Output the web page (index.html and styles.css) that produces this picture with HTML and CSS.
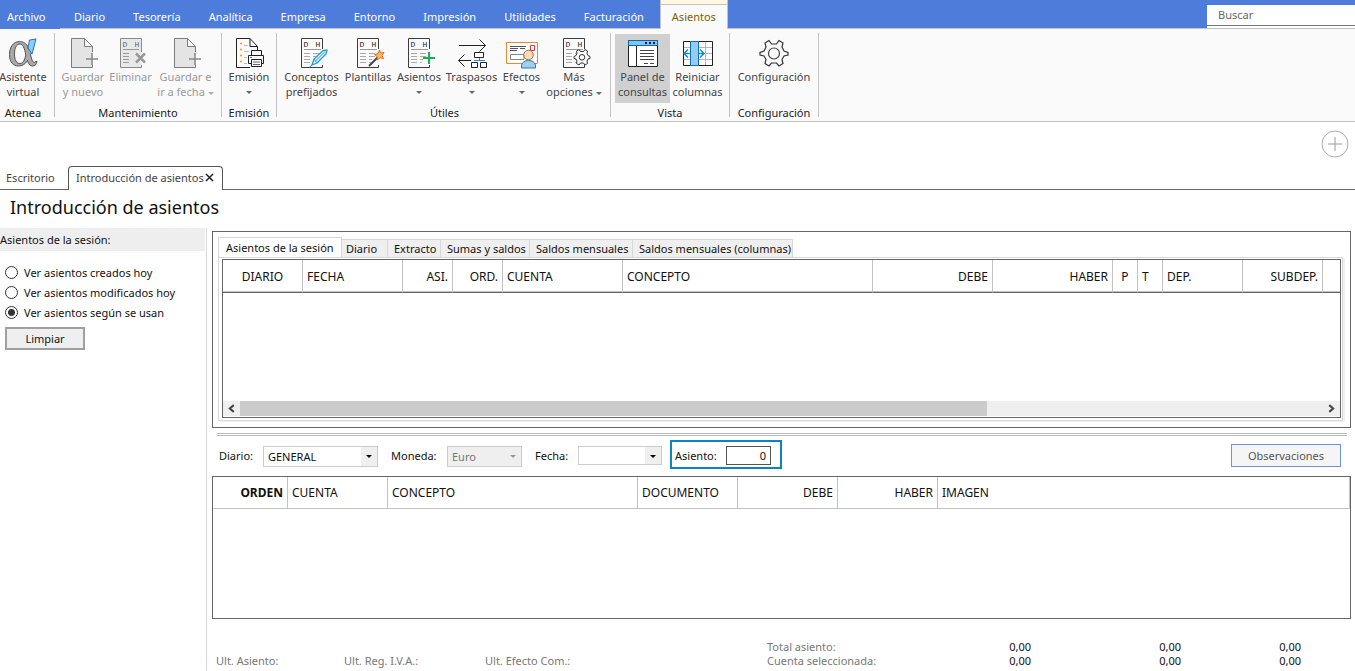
FILE: index.html
```html
<!DOCTYPE html>
<html lang="es">
<head>
<meta charset="utf-8">
<title>Introducción de asientos</title>
<link rel="stylesheet" href="styles.css">
</head>
<body>
<svg class="defs" aria-hidden="true">
  <defs>
    <symbol id="page-plus" viewBox="0 0 32 32">
      <path d="M25.500 15V9.500L17.500 1.500H4.500V30.500H25.500V28" fill="#e4e4e4" stroke="#7c7c7c"/>
      <path d="M17.500 1.500V9.500H25.500Z" fill="#fafafa" stroke="#7c7c7c"/>
      <path d="M19 22H31M25 16V28" stroke="#868686" stroke-width="1.500"/>
    </symbol>
    <symbol id="ledger" viewBox="0 0 32 32">
      <path d="M26.500 12V1.500H5.500V30.500H26.500V28" fill="none" stroke="#3c3c3c"/>
      <text x="7.500" y="10" font-size="8" font-family="Liberation Mono, monospace" fill="#222">D</text>
      <text x="19.500" y="10" font-size="8" font-family="Liberation Mono, monospace" fill="#222">H</text>
      <path d="M8 12.500H25" stroke="#999"/>
      <path d="M8 16.500H14M8 19.500H14M8 22.500H14M8 25.500H14M17 16.500H23M17 19.500H23M17 22.500H20M17 25.500H19" stroke="#aaa"/>
    </symbol>
  </defs>
</svg>

<header class="menubar">
  <nav class="menu">
    <button class="menu-item menu-file">Archivo</button>
    <button class="menu-item">Diario</button>
    <button class="menu-item">Tesorería</button>
    <button class="menu-item">Analítica</button>
    <button class="menu-item">Empresa</button>
    <button class="menu-item">Entorno</button>
    <button class="menu-item">Impresión</button>
    <button class="menu-item">Utilidades</button>
    <button class="menu-item">Facturación</button>
    <button class="menu-item menu-active">Asientos</button>
  </nav>
  <input class="search" type="text" placeholder="Buscar" aria-label="Buscar">
</header>

<section class="ribbon">
  <div class="group group-first">
    <div class="tools">
      <button class="tool w-46">
        <svg class="icon" viewBox="0 0 32 32"><path d="M20.500 9C18 5.500 15.500 4.500 12.500 4.500C6.500 4.500 2.500 10 2.500 17.500C2.500 25 6 29 11.500 29C15.500 29 18.500 27 20.500 23.500C21.500 27.500 23.500 29 25.500 29C28 29 29.500 27.500 30 24.500H28.500C28 26 26 26 25 23L23.500 18L27 8H23L21.500 12.500ZM13 7C16 7 17.500 11 18.800 18C17.500 24 15.500 26.500 13 26.500C9.500 26.500 7.500 23 7.500 17C7.500 11 9.500 7 13 7Z" fill="#a8a8a8" stroke="#555" fill-rule="evenodd"/><path d="M22.500 3L29 2L25 17L21 11Z" fill="#8fcdf5" stroke="#1c78b8"/></svg>
        <span>Asistente<br>virtual</span>
      </button>
    </div>
    <div class="group-name">Atenea</div>
  </div>
  <div class="group group-edit">
    <div class="tools">
      <button class="tool w-54" disabled><svg class="icon"><use href="#page-plus"/></svg><span>Guardar<br>y nuevo</span></button>
      <button class="tool w-41" disabled>
        <svg class="icon" viewBox="0 0 32 32"><path d="M26.500 15V1.500H5.500V30.500H26.500V28" fill="#e8e8e8" stroke="#8a8a8a"/><text x="7.500" y="10" font-size="8" font-family="Liberation Mono, monospace" fill="#666">D</text><text x="19.500" y="10" font-size="8" font-family="Liberation Mono, monospace" fill="#666">H</text><path d="M8 12.500H24" stroke="#999"/><path d="M8 16.500H14M8 19.500H14M8 22.500H14M8 25.500H14" stroke="#999"/><path d="M21 16.500L30 25.500M30 16.500L21 25.500" stroke="#999" stroke-width="2.500"/></svg>
        <span>Eliminar</span>
      </button>
      <button class="tool w-69" disabled><svg class="icon"><use href="#page-plus"/></svg><span>Guardar e<br>ir a fecha <i class="caret"></i></span></button>
    </div>
    <div class="group-name">Mantenimiento</div>
  </div>
  <div class="group">
    <div class="tools">
      <button class="tool w-54">
        <svg class="icon" viewBox="0 0 32 32"><path d="M24.500 13V9.500L17 1.500H3.500V30.500H17M17 1.500V9.500H24.500" fill="none" stroke="#222"/><path d="M7 6.500H9M7 12.500H9M7 18.500H9M7 24.500H9" stroke="#f29a1f" stroke-width="1.500"/><path d="M11 8.500H15M11 14.500H16M11 20.500H14M11 26.500H14" stroke="#bbb"/><path d="M18.500 18.500V13.500H28.500V18.500M18.500 26.500H15.500V18.500H30.500V26.500H28.500" fill="#fff" stroke="#222"/><path d="M18.500 22.500H28.500V29.500H18.500Z" fill="#fff" stroke="#222"/><path d="M20 25H27M20 27.500H27" stroke="#666"/><path d="M17 20.500H19" stroke="#168bd0"/></svg>
        <span>Emisión</span><i class="caret"></i>
      </button>
    </div>
    <div class="group-name">Emisión</div>
  </div>
  <div class="group group-wide">
    <div class="tools">
      <button class="tool w-57">
        <svg class="icon" viewBox="0 0 32 32"><use href="#ledger"/><path d="M16 28L18 22L27 13.500L31 13L30 17L21 26Z" fill="#e3f5fd" stroke="#1c9cd8" stroke-width="1.300"/><path d="M18 22L21 26M19.500 24L29 14.500M16 28L13.500 30" stroke="#1c9cd8"/></svg>
        <span>Conceptos<br>prefijados</span>
      </button>
      <button class="tool w-56">
        <svg class="icon" viewBox="0 0 32 32"><use href="#ledger"/><path d="M17 29L27 19" stroke="#444" stroke-width="2"/><path d="M27.500 13L28.800 16L32 15.500L30 18.500L31.500 21.500L28 20.700L25.500 23L25 19.500L22.500 17.500L26 16.700Z" fill="#fbc24b" stroke="#e8642b"/></svg>
        <span>Plantillas</span>
      </button>
      <button class="tool w-46">
        <svg class="icon" viewBox="0 0 32 32"><use href="#ledger"/><path d="M20 21H32M26 15V27" stroke="#1eac57" stroke-width="2"/></svg>
        <span>Asientos</span><i class="caret"></i>
      </button>
      <button class="tool w-59">
        <svg class="icon" viewBox="0 0 32 32"><path d="M3 8.500H29.500M23.500 2.500L29.500 8.500L23.500 14.500M15 23.500H2.500M8.500 17.500L2.500 23.500L8.500 29.500" fill="none" stroke="#222"/><path d="M18 23.500H29M23.500 21V23.500" stroke="#1c8fd0"/><path d="M18.500 15.500H27.500V20.500H18.500ZM15.500 25.500H21.500V30.500H15.500ZM24.500 25.500H30.500V30.500H24.500Z" fill="#fff" stroke="#222"/></svg>
        <span>Traspasos</span><i class="caret"></i>
      </button>
      <button class="tool w-41">
        <svg class="icon" viewBox="0 0 32 32"><path d="M.500 5.500H31.500V26.500H.500Z" fill="#fff" stroke="#ec8b2d"/><path d="M4 9.500H20M4 11.500H12M14 11.500H19M4 13.500H11" stroke="#555"/><path d="M4.500 17.500H18V22.500H4.500Z" fill="none" stroke="#888"/><path d="M24.500 8.500H28.500V13.500H24.500Z" fill="none" stroke="#ee3338"/><path d="M15.500 31V28Q17 23.500 22.500 23.500Q28 23.500 29.500 28V31Z" fill="#9fd0f0" stroke="#327aad"/><circle cx="22.500" cy="18" r="4.800" fill="#fbdcb9" stroke="#a56d45"/></svg>
        <span>Efectos</span><i class="caret"></i>
      </button>
      <button class="tool w-64">
        <svg class="icon" viewBox="0 0 32 32"><use href="#ledger"/><path d="M21 12.500L22.500 14.500H25.500L27 12.500L29.500 14L29 16.500L30 18.500L32 19.500V21.500L30 22L29 24L29.500 26.500L27 28L25.500 26H22.500L21 28L18.500 26.500L19 24L18 22L16 21.500V19.500L18 18.500L19 16.500L18.500 14Z" fill="#fafafa" stroke="#333"/><circle cx="24" cy="20.300" r="2.800" fill="none" stroke="#333"/></svg>
        <span>Más<br>opciones <i class="caret"></i></span>
      </button>
    </div>
    <div class="group-name">Útiles</div>
  </div>
  <div class="group group-view">
    <div class="tools">
      <button class="tool w-55 tool-on" aria-pressed="true">
        <svg class="icon" viewBox="0 0 32 32"><path d="M1.500 3.500H30.500V29.500H1.500Z" fill="#fff" stroke="#222"/><path d="M1.500 3.500H30.500V8.500H1.500Z" fill="#82c5ee" stroke="#0f67a8"/><path d="M9.500 9V29" stroke="#222"/><path d="M18 6H20M22 6H24M26 6H28" stroke="#123" stroke-width="2"/><path d="M13 13.500H27M13 16.500H27M13 19.500H27M13 22.500H27M17 26.500H21M23 26.500H27" stroke="#444"/></svg>
        <span>Panel de<br>consultas</span>
      </button>
      <button class="tool w-55">
        <svg class="icon" viewBox="0 0 32 32"><path d="M1.500 4.500H30.500V28.500H1.500Z" fill="#fff"/><path d="M2 10.500H30M2 16.500H30M2 22.500H30M23.500 5V28" stroke="#b5b5b5"/><path d="M1.500 4.500H30.500V28.500H1.500Z" fill="none" stroke="#222"/><path d="M8.500 4.500H16.500V28.500H8.500Z" fill="#92cef3" stroke="#146bb0"/><path d="M7.500 16.500H2.500M6 12.500L2 16.500L6 20.500M16.500 16.500H22M18 12.500L22 16.500L18 20.500" fill="none" stroke="#168bd0" stroke-width="1.500"/></svg>
        <span>Reiniciar<br>columnas</span>
      </button>
    </div>
    <div class="group-name">Vista</div>
  </div>
  <div class="group">
    <div class="tools">
      <button class="tool w-88">
        <svg class="icon" viewBox="0 0 32 32"><path d="M11 3.500L13.500 7H18.500L21 3.500L25 6L24 10L26 14L30 15.500V18L26 19L24 22.500L25 26.500L21 29L18.500 26H13.500L11 29L7 26.500L8 22.500L6 19L2 18V15.500L6 14L8 10L7 6Z" fill="#fafafa" stroke="#333" stroke-width="1.200"/><circle cx="16" cy="16.500" r="5.500" fill="none" stroke="#444" stroke-width="1.200"/></svg>
        <span>Configuración</span>
      </button>
    </div>
    <div class="group-name">Configuración</div>
  </div>
</section>

<div class="docbar">
  <button class="add" aria-label="Añadir"><svg viewBox="0 0 28 28"><circle cx="14" cy="14" r="13" fill="#fff" stroke="#aaa"/><path d="M7 14H21M14 7V21" stroke="#999"/></svg></button>
  <div class="doctabs">
    <button class="doctab">Escritorio</button>
    <button class="doctab doctab-on">Introducción de asientos
      <svg class="close" viewBox="0 0 9 9"><path d="M1 1L8 8M8 1L1 8" stroke="#222" stroke-width="1.500"/></svg></button>
    <span class="doctab-rest"></span>
  </div>
</div>

<h1>Introducción de asientos</h1>

<div class="workspace">
  <aside class="side">
    <h2>Asientos de la sesión:</h2>
    <div class="filters">
      <label><input type="radio" name="filter">Ver asientos creados hoy</label>
      <label><input type="radio" name="filter">Ver asientos modificados hoy</label>
      <label><input type="radio" name="filter" checked>Ver asientos según se usan</label>
      <button class="clear">Limpiar</button>
    </div>
  </aside>

  <main class="content">
    <section class="session">
      <div class="subtabs">
        <button class="subtab subtab-on">Asientos de la sesión</button>
        <button class="subtab w-46 subtab-near">Diario</button>
        <button class="subtab w-53">Extracto</button>
        <button class="subtab w-89">Sumas y saldos</button>
        <button class="subtab w-103">Saldos mensuales</button>
        <button class="subtab w-160">Saldos mensuales (columnas)</button>
      </div>
      <div class="subpanel">
        <div class="grid">
          <table>
            <colgroup><col class="w-80"><col class="w-100"><col class="w-50"><col class="w-50"><col class="w-120"><col class="w-250"><col class="w-120"><col class="w-120"><col class="w-25"><col class="w-25"><col class="w-80"><col class="w-80"><col></colgroup>
            <thead><tr><th class="mid">DIARIO</th><th>FECHA</th><th class="num">ASI.</th><th class="num">ORD.</th><th>CUENTA</th><th>CONCEPTO</th><th class="num">DEBE</th><th class="num">HABER</th><th class="mid">P</th><th>T</th><th>DEP.</th><th class="num">SUBDEP.</th><th class="last"></th></tr></thead>
          </table>
          <div class="scroll">
            <button class="arrow" aria-label="Izquierda"><svg viewBox="0 0 8 8"><path d="M6 1L2.500 4L6 7" fill="none" stroke="#444" stroke-width="1.800"/></svg></button>
            <div class="track"><div class="thumb"></div></div>
            <button class="arrow" aria-label="Derecha"><svg viewBox="0 0 8 8"><path d="M2 1L5.500 4L2 7" fill="none" stroke="#444" stroke-width="1.800"/></svg></button>
          </div>
        </div>
      </div>
    </section>

    <div class="splitter"></div>

    <form class="entry">
      <label for="diario">Diario:</label>
      <span class="combo combo-diario"><select id="diario"><option>GENERAL</option></select></span>
      <label for="moneda">Moneda:</label>
      <span class="combo combo-moneda"><select id="moneda" disabled><option>Euro</option></select></span>
      <label for="fecha">Fecha:</label>
      <span class="combo combo-fecha"><select id="fecha"><option></option></select></span>
      <span class="marked"><label for="asiento">Asiento:</label><input id="asiento" type="text" value="0"></span>
      <button type="button" class="notes">Observaciones</button>
    </form>

    <div class="lines">
      <table>
        <colgroup><col class="w-75"><col class="w-100"><col class="w-250"><col class="w-100"><col class="w-100"><col class="w-100"><col></colgroup>
        <thead><tr><th class="num"><b>ORDEN</b></th><th>CUENTA</th><th>CONCEPTO</th><th>DOCUMENTO</th><th class="num">DEBE</th><th class="num">HABER</th><th>IMAGEN</th></tr></thead>
      </table>
    </div>

    <footer class="status">
      <span>Ult. Asiento:</span><span>Ult. Reg. I.V.A.:</span><span>Ult. Efecto Com.:</span>
      <span>Total asiento:<br>Cuenta seleccionada:</span>
      <span class="sum">0,00<br>0,00</span><span class="sum">0,00<br>0,00</span><span class="sum">0,00<br>0,00</span>
    </footer>
  </main>
</div>
</body>
</html>
```
FILE: styles.css
```css
* { box-sizing: border-box; }
body {
  margin: 0;
  min-height: 100vh;
  display: flex;
  flex-direction: column;
  background: #fff;
  color: #111;
  font: 11px/15px "Noto Sans", "Open Sans", sans-serif;
}
button, input, select { font: inherit; color: inherit; margin: 0; }
button { border: 0; padding: 0; background: none; white-space: nowrap; }
svg { display: block; fill: none; }
.defs { position: absolute; width: 0; height: 0; }

/* Menu */
.menubar { display: flex; justify-content: space-between; background: #4d7cdb; border-bottom: 1px solid #c3c3c3; height: 29px; }
.menu { display: flex; color: #fff; }
.menu-item { padding: 5px 14px 0; height: 28px; }
.menu-file { width: 60px; height: 29px; padding: 4px 7px 0; text-align: left; background: #4d7cdb; }
.menu-active { height: 29px; margin-left: 2px; padding: 0 11px 2px; background: #fafafa; color: #806000; border: 1px solid #c3c3c3; border-top: 0; border-bottom: 0; box-shadow: inset 0 4px #fff8e1, inset 0 5px #c3c3c3; padding-top: 5px; }
.search { width: 148px; height: 21px; margin-top: 5px; padding: 0 11px 2px; border: 0; border-bottom: 1px solid #777; border-radius: 0; background: #fff; outline: 0; box-shadow: 0 2px #fff; }
.search::placeholder { color: #666; opacity: 1; }

/* Ribbon */
.ribbon { display: flex; height: 93px; padding: 4px 0; background: #fafafa; border-bottom: 1px solid #c3c3c3; }
.group { border-right: 1px solid #c3c3c3; display: flex; flex-direction: column; align-items: center; }
.group-first { padding-right: 8px; }
.group-edit { padding: 0 1px; }
.group-wide { padding: 0 4px 0 6px; }
.group-view { padding: 0 4px; }
.tools { display: flex; padding-top: 1px; }
.tool { display: flex; flex-direction: column; align-items: center; height: 69px; padding-top: 3px; color: #444; }
.tool span { display: block; }
.tool > .caret { margin-top: 7px; }
.tool:disabled { color: #999; }
.tool-on { background: #d0d0d0; }
.icon { width: 32px; height: 32px; flex: none; overflow: visible; }
.caret { display: inline-block; width: 0; height: 0; border: 3px solid transparent; border-top-color: currentColor; border-bottom: 0; vertical-align: 1px; opacity: .8; }
.group-name { line-height: 15px; padding-top: 2px; color: #222; white-space: nowrap; }

.w-25 { width: 25px; } .w-41 { width: 41px; } .w-46 { width: 46px; } .w-50 { width: 50px; }
.w-53 { width: 53px; } .w-54 { width: 54px; } .w-55 { width: 55px; } .w-56 { width: 56px; }
.w-57 { width: 57px; } .w-59 { width: 59px; } .w-64 { width: 64px; } .w-69 { width: 69px; }
.w-75 { width: 75px; } .w-80 { width: 80px; } .w-88 { width: 88px; } .w-89 { width: 89px; }
.w-100 { width: 100px; } .w-103 { width: 103px; } .w-120 { width: 120px; }
.w-160 { width: 160px; } .w-250 { width: 250px; }

/* Document tabs */
.docbar { display: flex; flex-direction: column; padding-top: 7px; }
.add { align-self: flex-end; width: 28px; height: 29px; margin-right: 6px; }
.doctabs { display: flex; height: 24px; margin-top: 8px; color: #444; }
.doctab { width: 68px; padding: 0 6px 1px; border-bottom: 1px solid #666; text-align: left; }
.doctab-on { display: flex; align-items: center; justify-content: space-between; width: 155px; padding: 0 8px 2px 7px; border: 1px solid #555; border-bottom: 0; border-radius: 4px 4px 0 0; }
.doctab-rest { flex: 1; border-bottom: 1px solid #666; }
.close { width: 9px; height: 9px; }
h1 { margin: 0; padding: 5px 10px 9px; font-size: 18px; line-height: 24px; font-weight: 400; }

/* Side panel */
.workspace { flex: 1; display: flex; }
.side { width: 207px; border-right: 1px solid #d8d8d8; }
h2 { margin: 0 1px 0 0; padding: 4px 0; background: #eee; font-size: 11px; line-height: 15px; font-weight: 400; }
.filters { display: flex; flex-direction: column; align-items: flex-start; padding: 11px 5px; }
.filters label { display: flex; align-items: center; gap: 6px; height: 20px; }
.filters input { appearance: none; width: 13px; height: 13px; border: 1px solid #333; border-radius: 50%; background: #fff; }
.filters input:checked { background: radial-gradient(circle, #333 0 3px, #fff 4px); }
.clear { width: 80px; height: 23px; margin-top: 5px; border: 2px solid #a0a0a0; background: #efefef; }

/* Session entries */
.content { flex: 1; min-width: 0; display: flex; flex-direction: column; padding: 3px 4px 3px 5px; }
.session { border: 1px solid #666; padding: 5px 7px 6px 5px; }
.subtabs { display: flex; align-items: flex-end; }
.subtab { height: 18px; padding: 0 6px; text-align: left; background: #efefef; border: 1px solid #d8d8d8; border-width: 1px 1px 0 0; }
.subtab-on { width: 124px; height: 20px; padding: 0 7px 1px; background: #fff; border-left-width: 1px; }
.subtab-near { padding: 0 4px; }
.subpanel { border: 1px solid #d8d8d8; padding: 1px 1px 2px 3px; box-shadow: 2px 1px #f0f0f0; }
.grid { height: 159px; border: 1px solid #666; display: flex; flex-direction: column; justify-content: space-between; }
table { width: 100%; table-layout: fixed; border-collapse: separate; border-spacing: 0; }
th { height: 32px; padding: 0 4px; border-right: 1px solid #c3c3c3; border-bottom: 1px solid #c3c3c3; font-weight: 400; font-size: 12px; text-align: left; white-space: nowrap; }
.grid th { height: 33px; border-bottom: 1px solid #666; box-shadow: inset 0 -1px #c3c3c3; }
.grid .last { border-right: 0; }
th.num { text-align: right; }
th.mid { text-align: center; }
.scroll { display: flex; height: 16px; background: #efefef; border-bottom: 1px solid #fff; }
.arrow { width: 17px; display: flex; align-items: center; justify-content: center; }
.arrow svg { width: 9px; height: 9px; }
.track { flex: 1; }
.thumb { width: 69%; height: 15px; background: #cbcbcb; }
.splitter { height: 3px; margin: 5px 4px 4px 5px; border: 1px solid #bbb; border-width: 1px 0; }

/* Entry form */
.entry { display: flex; align-items: center; height: 29px; margin-bottom: 7px; padding: 0 10px 0 7px; }
.entry > label { flex: none; margin-top: 2px; }
.entry > label[for="diario"] { width: 44px; }
.entry > label[for="moneda"] { width: 56px; }
.entry > label[for="fecha"] { width: 43px; }
.combo { position: relative; height: 21px; margin-top: 4px; border: 1px solid #ccc; background: #fff; }
.combo select { display: block; appearance: none; width: 100%; height: 100%; padding: 0 4px; border: 0; background: transparent; outline: 0; border-right: 16px solid #efefef; border-radius: 0; opacity: 1; }
.combo::after { content: ""; position: absolute; right: 5px; top: 8px; border: 3px solid transparent; border-top-color: #000; border-bottom: 0; pointer-events: none; }
.combo-diario { width: 115px; margin-right: 13px; }
.combo-moneda { width: 75px; margin-right: 13px; background: #efefef; color: #777; }
.combo-moneda::after { border-top-color: #999; }
.combo-fecha { width: 84px; height: 19px; margin-top: 2px; margin-right: 8px; }
.marked { display: flex; align-items: center; justify-content: space-between; width: 112px; height: 29px; padding: 2px 9px 0 3px; border: 2px solid #0a84c6; }
.marked input { width: 45px; height: 19px; padding: 0 4px; border: 1px solid #555; border-radius: 0; background: #fff; text-align: right; outline: 0; }
.notes { width: 110px; height: 23px; margin-top: 2px; margin-left: auto; border: 1px solid #6c93e2; background: #f5f5f5; color: #555; }

/* Entry lines */
.lines { flex: 1; border: 1px solid #666; }

/* Totals */
.status { display: grid; grid-template-columns: 128px 141px 282px 1fr 20px 150px 120px; align-items: end; margin-top: 21px; padding: 0 50px 0 4px; line-height: 14px; color: #777; }
.sum { color: #111; display: flex; justify-content: flex-end; text-align: right; }
```
